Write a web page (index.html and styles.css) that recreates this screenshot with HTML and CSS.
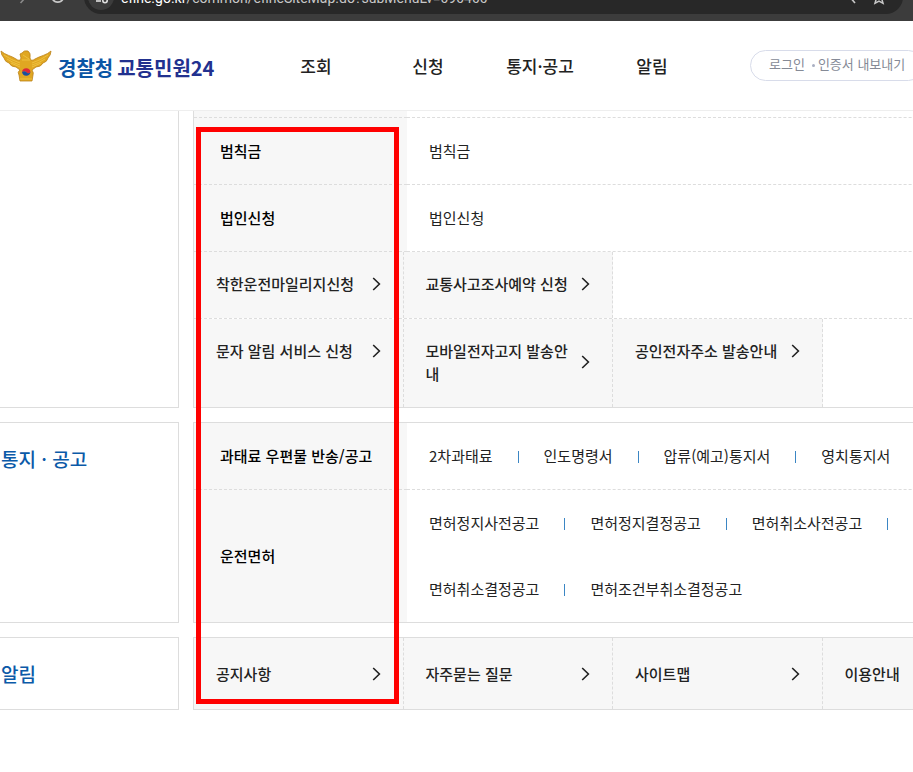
FILE: index.html
```html
<!DOCTYPE html>
<html lang="ko">
<head>
    <meta charset="UTF-8">
    <title>경찰청 교통민원24</title>
    <link rel="stylesheet" href="styles.css">
</head>
<body>
    <svg class="defs" width="0" height="0">
        <symbol id="chevron" viewBox="0 0 9 14">
            <path d="M1.2 1 L7.4 7 L1.2 13" fill="none" stroke="#222" stroke-width="1.6"/>
        </symbol>
    </svg>

    <div class="browser-bar">
        <svg class="bar-nav" width="84" height="21" viewBox="0 0 84 21">
            <path d="M20.5 3 L25 -2" stroke="#8a8a8a" stroke-width="1.6" fill="none"/>
            <path d="M52.5 -1 A6 6 0 0 0 63 -1" stroke="#c8c8c8" stroke-width="1.8" fill="none"/>
        </svg>
        <div class="address">
            <svg class="site-info" width="26" height="26" viewBox="0 0 26 26">
                <circle cx="13" cy="13" r="13" fill="#3c3c3c"/>
                <path d="M8 17 H13" stroke="#e0e0e0" stroke-width="1.6"/>
                <circle cx="17" cy="16.5" r="2.2" fill="none" stroke="#e0e0e0" stroke-width="1.6"/>
            </svg>
            <span class="url"><b>efine.go.kr</b>/common/efineSiteMap.do?subMenuLv=090400</span>
            <svg class="bar-icons" width="44" height="26" viewBox="0 0 44 26">
                <path d="M4 12 L10 19" fill="none" stroke="#c8c8c8" stroke-width="1.6"/>
                <path d="M34 7 L35.8 12 L40 12.3 L36.8 15 L38 19.3 L34 17 L30 19.3 L31.2 15 L28 12.3 L32.2 12 Z" fill="none" stroke="#c8c8c8" stroke-width="1.5"/>
            </svg>
        </div>
    </div>

    <header class="header">
        <a href="#" class="logo">
            <svg width="52" height="32" viewBox="0 0 52 32">
                <path d="M1 1 C5 5 12 6 16 9 Q20 12 21 8 L20 4 L22 3 Q24 0 28 1 Q31 3 30 8 Q31 12 35 9 C40 6 47 5 51 1 Q51 5 48 8 Q47 12 43 13 Q41 17 36 17 L32 20 Q34 23 33 25 L32 31 H20 L19 25 Q17 22 20 20 L16 17 Q11 17 9 13 Q5 12 4 8 Q1 5 1 1 Z" fill="#e0a722" stroke="#bd831b" stroke-width="0.8"/>
                <path d="M4 5 Q11 10 20 13 M7 9 Q13 13 20 15 M11 13 L20 17 M48 5 Q41 10 32 13 M45 9 Q39 13 32 15 M41 13 L32 17 M23 5 L29 9 M22 10 H30 M20 29 H32" fill="none" stroke="#efc443" stroke-width="0.9"/>
                <path d="M22 22 A4.3 4.3 0 0 1 30.5 22 Q28.3 24.5 26.3 22 Q24.3 20.3 22 22 Z" fill="#dd2837"/>
                <path d="M22 22 Q24.3 20.3 26.3 22 Q28.3 24.5 30.5 22 A4.3 4.3 0 0 1 22 22 Z" fill="#1b4e9e"/>
            </svg>
            <span class="logo-text"><span class="logo-police">경찰청</span><span>교통민원24</span></span>
        </a>
        <nav class="menu">
            <a href="#">조회</a>
            <a href="#">신청</a>
            <a href="#">통지·공고</a>
            <a href="#">알림</a>
        </nav>
        <div class="user-menu">
            <a href="#">로그인</a>
            <a href="#" class="dot">인증서 내보내기</a>
        </div>
    </header>

    <main class="sitemap">
        <section class="group group-first">
            <div class="group-title"></div>
            <div class="group-body">
                <table>
                    <tr class="cut"><th></th><td></td></tr>
                    <tr><th scope="row">범칙금</th><td><a href="#">범칙금</a></td></tr>
                    <tr><th scope="row">법인신청</th><td><a href="#">법인신청</a></td></tr>
                </table>
                <ul class="links">
                    <li><a href="#"><span>착한운전마일리지신청</span><svg class="chevron"><use href="#chevron"/></svg></a></li>
                    <li><a href="#"><span>교통사고조사예약 신청</span><svg class="chevron"><use href="#chevron"/></svg></a></li>
                </ul>
                <ul class="links">
                    <li><a href="#"><span>문자 알림 서비스 신청</span><svg class="chevron"><use href="#chevron"/></svg></a></li>
                    <li><a href="#"><span>모바일전자고지 발송안내</span><svg class="chevron"><use href="#chevron"/></svg></a></li>
                    <li><a href="#"><span>공인전자주소 발송안내</span><svg class="chevron"><use href="#chevron"/></svg></a></li>
                </ul>
            </div>
        </section>

        <section class="group">
            <h2 class="group-title">통지 · 공고</h2>
            <div class="group-body">
                <table>
                    <tr>
                        <th scope="row">과태료 우편물 반송/공고</th>
                        <td>
                            <div class="items"><a href="#">2차과태료</a><a href="#">인도명령서</a><a href="#">압류(예고)통지서</a><a href="#">영치통지서</a></div>
                        </td>
                    </tr>
                    <tr>
                        <th scope="row">운전면허</th>
                        <td>
                            <div class="items more"><a href="#">면허정지사전공고</a><a href="#">면허정지결정공고</a><a href="#">면허취소사전공고</a></div>
                            <div class="items"><a href="#">면허취소결정공고</a><a href="#">면허조건부취소결정공고</a></div>
                        </td>
                    </tr>
                </table>
            </div>
        </section>

        <section class="group">
            <h2 class="group-title">알림</h2>
            <div class="group-body">
                <ul class="links links-tall">
                    <li><a href="#"><span>공지사항</span><svg class="chevron"><use href="#chevron"/></svg></a></li>
                    <li><a href="#"><span>자주묻는 질문</span><svg class="chevron"><use href="#chevron"/></svg></a></li>
                    <li><a href="#"><span>사이트맵</span><svg class="chevron"><use href="#chevron"/></svg></a></li>
                    <li><a href="#"><span>이용안내</span><svg class="chevron"><use href="#chevron"/></svg></a></li>
                </ul>
            </div>
        </section>

        <div class="highlight"></div>
    </main>
</body>
</html>
```
FILE: styles.css
```css
* {
    box-sizing: border-box;
}

body {
    margin: 0;
    font-family: 'Noto Sans CJK KR', 'Noto Sans', sans-serif;
    font-size: 15px;
    line-height: 23px;
    color: #222;
    background-color: #fff;
    overflow-x: hidden;
}

a {
    color: inherit;
    text-decoration: none;
}

.defs {
    display: none;
}

/* browser bar */
.browser-bar {
    display: flex;
    align-items: flex-end;
    height: 21px;
    padding-right: 10px;
    background-color: #3c3c3c;
    overflow: hidden;
}

.bar-nav {
    flex: none;
}

.address {
    flex: 1;
    display: flex;
    align-items: center;
    height: 34px;
    margin-bottom: 7px;
    padding: 0 14px 0 4px;
    border-radius: 17px;
    background-color: #282828;
}

.url {
    flex: 1;
    margin-left: 7px;
    padding-top: 2px;
    font-family: Roboto, 'Noto Sans', sans-serif;
    font-size: 14px;
    color: #c7c7c7;
}

.url b {
    font-weight: normal;
    color: #fff;
}

/* header */
.header {
    display: flex;
    align-items: center;
    height: 90px;
    border-bottom: 1px solid #eee;
}

.logo {
    display: flex;
    align-items: center;
    flex: none;
    width: 260px;
    gap: 6px;
}

.logo-text {
    display: flex;
    gap: 4px;
    padding-top: 4px;
    font-size: 20px;
    font-weight: bold;
    color: #22318f;
}

.logo-police {
    color: #0b56a5;
}

.menu {
    flex: none;
    display: grid;
    grid-template-columns: repeat(4, 112px);
    text-align: center;
    font-size: 17px;
    font-weight: 500;
}

.user-menu {
    flex: none;
    display: flex;
    gap: 7px;
    height: 31px;
    margin-left: 42px;
    padding: 0 18px;
    border: 1px solid #d8dcea;
    border-radius: 16px;
    font-size: 13px;
    line-height: 26px;
    color: #858a96;
}

.dot::before {
    content: '';
    display: inline-block;
    width: 3px;
    height: 3px;
    margin-right: 3px;
    border-radius: 50%;
    background-color: #a9afc2;
    vertical-align: middle;
}

/* sitemap, wider than the window on the right */
.sitemap {
    position: relative;
    display: flex;
    flex-direction: column;
    gap: 14px;
    margin-right: -120px;
}

.group {
    display: grid;
    grid-template-columns: 179px 1fr;
    gap: 14px;
}

.group-title {
    margin: 0;
    padding: 24px 1px;
    border: 1px solid #ddd;
    border-left: 0;
    font-size: 19px;
    font-weight: 500;
    color: #0b5aa8;
}

.group-body {
    border: 1px solid #ddd;
}

.group-first .group-title,
.group-first .group-body {
    border-top: 0;
}

table {
    width: 100%;
    border-collapse: separate;
    border-spacing: 0;
}

th,
td {
    height: 67px;
    padding: 0 22px 2px;
    border-bottom: 1px dashed #ddd;
    text-align: left;
}

th {
    width: 213px;
    padding: 0 0 2px 26px;
    background-color: #f7f7f7;
    font-weight: 500;
    color: #000;
}

.cut th,
.cut td {
    height: 7px;
}

.group-body > table:last-child tr:last-child > * {
    border-bottom: 0;
}

.items {
    display: flex;
    align-items: center;
    height: 66px;
    padding-bottom: 2px;
}

td:has(.items) {
    padding-bottom: 0;
}

.items a + a::before,
.more a:last-child::after {
    content: '';
    display: inline-block;
    width: 1px;
    height: 12px;
    margin: 0 25px;
    background-color: #3b86c4;
    vertical-align: -1px;
}

.links {
    display: grid;
    grid-template-columns: repeat(4, 1fr);
    margin: 0;
    padding: 0;
    list-style: none;
}

.links + .links {
    border-top: 1px dashed #ddd;
}

.links li {
    min-height: 66px;
    padding: 20px 22px 22px;
    border-right: 1px dashed #ddd;
    background-color: #f7f7f7;
    font-weight: 500;
}

.links a {
    display: flex;
    align-items: center;
    justify-content: space-between;
    gap: 8px;
}

.links-tall li {
    padding-top: 24px;
    padding-bottom: 24px;
}

.chevron {
    flex: none;
    width: 9px;
    height: 14px;
}

/* marked column */
.highlight {
    position: absolute;
    top: 16px;
    bottom: 6px;
    left: 196px;
    width: 203px;
    border: 5px solid #f00;
    pointer-events: none;
}
```
